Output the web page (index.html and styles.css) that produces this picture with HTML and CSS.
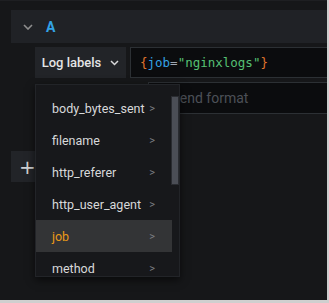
FILE: index.html
```html
<!DOCTYPE html>
<html lang="en">
<head>
    <meta charset="UTF-8">
    <title>Query editor</title>
    <link rel="stylesheet" href="styles.css">
</head>
<body>

<div class="frame">
    <!-- Query header -->
    <div class="query-header">
        <svg class="chevron" width="10" height="6" viewBox="0 0 10 6"><path d="M1 1l4 4 4-4" fill="none" stroke="#8e8e8e" stroke-width="1.6"/></svg>
        <span class="ref-id">A</span>
    </div>

    <!-- Log labels + query -->
    <div class="query-row">
        <button class="labels-btn">Log labels
            <svg width="9" height="6" viewBox="0 0 9 6"><path d="M1 1l3.5 3.5L8 1" fill="none" stroke="#d8d9da" stroke-width="1.5"/></svg>
        </button>
        <div class="query-field"><span class="br">{</span><span class="key">job</span><span class="op">=</span><span class="str">"nginxlogs"</span><span class="br">}</span></div>
    </div>

    <div class="legend-row">
        <div class="legend-field">Legend format</div>
    </div>

    <div class="add-row">
        <button class="add-btn">+</button>
    </div>

    <!-- Label menu -->
    <div class="menu">
        <ul class="menu-list">
            <li>body_bytes_sent <span class="arrow">&gt;</span></li>
            <li>filename <span class="arrow">&gt;</span></li>
            <li>http_referer <span class="arrow">&gt;</span></li>
            <li>http_user_agent <span class="arrow">&gt;</span></li>
            <li class="active">job <span class="arrow">&gt;</span></li>
            <li>method <span class="arrow">&gt;</span></li>
        </ul>
        <div class="scroll-thumb"></div>
    </div>
</div>

</body>
</html>
```

FILE: styles.css
```css
* {
    margin: 0;
    padding: 0;
    box-sizing: border-box;
}

body {
    font-family: Roboto, "Liberation Sans", sans-serif;
    background-color: #cfcfcf;
    width: 329px;
    height: 303px;
    overflow: hidden;
}

.frame {
    position: relative;
    width: 327px;
    height: 300px;
    overflow: hidden;
    background-color: #161719;
    border-top: 1px solid #1e1f22;
    padding: 9px 0 0 11px;
}

/* Header */
.query-header {
    display: flex;
    align-items: center;
    height: 33px;
    background-color: #202226;
    padding-left: 12px;
    gap: 13px;
}

.ref-id {
    color: #33a2e5;
    font-weight: bold;
    font-size: 14px;
}

/* Query row */
.query-row {
    display: flex;
    margin-top: 4px;
    padding-left: 24px;
    gap: 4px;
    height: 31px;
}

.labels-btn {
    width: 91px;
    display: flex;
    align-items: center;
    justify-content: center;
    gap: 9px;
    background-color: #222428;
    color: #e4e5e6;
    border: none;
    font-family: Roboto, "Liberation Sans", sans-serif;
    font-size: 13px;
    font-weight: 500;
}

.query-field {
    flex: 1;
    background-color: #0b0c0e;
    border: 1px solid #2c3034;
    border-right: none;
    padding-left: 9px;
    display: flex;
    align-items: center;
    font-family: "DejaVu Sans Mono", monospace;
    font-size: 12.5px;
}

.br { color: #e0752d; }
.key { color: #33a2e5; }
.op { color: #9fa7b3; }
.str { color: #56c074; }

/* Legend row */
.legend-row {
    display: flex;
    margin-top: 4px;
    padding-left: 137px;
    height: 32px;
}

.legend-field {
    flex: 1;
    border: 1px solid #2c3034;
    border-right: none;
    background-color: #0b0c0e;
    color: #4c5057;
    font-size: 14px;
    padding-left: 8px;
    display: flex;
    align-items: center;
}

.add-row {
    margin-top: 37px;
    display: flex;
}

.add-btn {
    width: 32px;
    height: 31px;
    background-color: #222428;
    border: none;
    color: #cfd0d2;
    font-size: 20px;
    font-family: "DejaVu Sans", sans-serif;
    padding-left: 1px;
}

/* Dropdown menu */
.menu {
    position: absolute;
    left: 35px;
    top: 83px;
    width: 145px;
    height: 193px;
    background-color: #17181b;
    border: 1px solid #222428;
    box-shadow: 0 3px 8px rgba(0, 0, 0, 0.6);
    overflow: hidden;
}

.menu-list {
    list-style: none;
    padding-top: 7px;
    width: 136px;
}

.menu-list li {
    height: 32px;
    display: flex;
    align-items: center;
    justify-content: space-between;
    padding: 0 17px 0 16px;
    color: #d8d9da;
    font-size: 12.5px;
}

.menu-list li.active {
    background-color: #333436;
    color: #eb9a18;
}

.arrow {
    color: #7b7e83;
    font-size: 11px;
}

.scroll-thumb {
    position: absolute;
    left: 135px;
    top: 11px;
    width: 8px;
    height: 89px;
    background-color: #4b4e56;
    border: 1px solid #2a2c31;
}
```
